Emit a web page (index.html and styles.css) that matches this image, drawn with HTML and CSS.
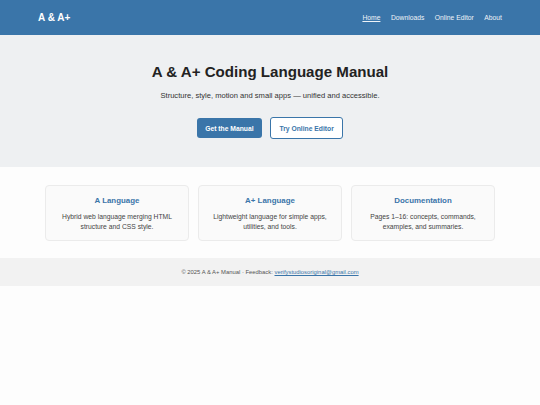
FILE: index.html
```html
<!DOCTYPE html>
<html lang="en">
<head>
<meta charset="utf-8">
<title>A &amp; A+ Coding Language Manual</title>
<link rel="stylesheet" href="styles.css">
</head>
<body>
<header class="site-header">
  <div class="logo">A &amp; A+</div>
  <nav class="nav">
    <a class="nav-link active" href="#">Home</a>
    <a class="nav-link" href="#">Downloads</a>
    <a class="nav-link" href="#">Online Editor</a>
    <a class="nav-link" href="#">About</a>
  </nav>
</header>
<section class="hero">
  <h1 class="hero-title">A &amp; A+ Coding Language Manual</h1>
  <p class="hero-sub">Structure, style, motion and small apps — unified and accessible.</p>
  <div class="hero-actions">
    <a class="btn btn-primary" href="#">Get the Manual</a>
    <a class="btn btn-outline" href="#">Try Online Editor</a>
  </div>
</section>
<section class="features">
  <div class="card">
    <h2 class="card-title">A Language</h2>
    <p class="card-text">Hybrid web language merging HTML structure and CSS style.</p>
  </div>
  <div class="card">
    <h2 class="card-title">A+ Language</h2>
    <p class="card-text">Lightweight language for simple apps, utilities, and tools.</p>
  </div>
  <div class="card">
    <h2 class="card-title">Documentation</h2>
    <p class="card-text">Pages 1–16: concepts, commands, examples, and summaries.</p>
  </div>
</section>
<footer class="site-footer">
  <p class="footer-text">© 2025 A &amp; A+ Manual · Feedback: <a class="footer-link" href="#">verifystudiosoriginal@gmail.com</a></p>
</footer>
</body>
</html>
```
FILE: styles.css
```css
* { box-sizing: border-box; }
html, body { margin: 0; padding: 0; }
body {
  font-family: "Liberation Sans", Arial, sans-serif;
  background: #fdfdfd;
  color: #333;
}
.site-header {
  height: 35px;
  background: #3a75a9;
  display: flex;
  align-items: center;
  justify-content: space-between;
  padding: 0 38px;
}
.logo {
  color: #fff;
  font-weight: bold;
  font-size: 10px;
}
.nav {
  display: flex;
  gap: 10.5px;
}
.nav-link {
  color: #eef3f8;
  font-size: 6.75px;
  text-decoration: none;
}
.nav-link.active { text-decoration: underline; }
.hero {
  background: #eef0f2;
  padding: 28px 20px 28px;
  text-align: center;
}
.hero-title {
  margin: 0;
  font-size: 15.1px;
  line-height: normal;
  font-weight: bold;
  color: #222;
}
.hero-sub {
  margin: 11px 0 0;
  font-size: 7.58px;
  line-height: normal;
  color: #333;
}
.hero-actions {
  margin-top: 17px;
  display: flex;
  justify-content: center;
  align-items: center;
  gap: 8px;
}
.btn {
  font-size: 6.75px;
  font-weight: bold;
  line-height: normal;
  text-decoration: none;
  padding: 6.3px 8.45px;
  border-radius: 3px;
}
.btn-primary {
  background: #3a75a9;
  color: #fff;
}
.btn-outline {
  background: #fff;
  color: #3a75a9;
  border: 1px solid #3a75a9;
  padding: 6.6px 8.45px;
}
.features {
  display: grid;
  grid-template-columns: repeat(3, 1fr);
  gap: 9px;
  padding: 18px 45px 17px;
}
.card {
  background: #fafafa;
  border: 1px solid #ebebeb;
  border-radius: 4px;
  padding: 10px 9px 7px;
  text-align: center;
  height: 56px;
}
.card-title {
  margin: 0;
  font-size: 7.9px;
  line-height: normal;
  font-weight: bold;
  color: #3a75a9;
}
.card-text {
  margin: 6.4px 0 0;
  font-size: 6.75px;
  line-height: 10.8px;
  color: #444;
}
.site-footer {
  background: #f2f2f2;
  height: 28px;
  display: flex;
  align-items: center;
  justify-content: center;
}
.footer-text {
  margin: 0;
  font-size: 5.87px;
  line-height: normal;
  color: #555;
}
.footer-link {
  color: #3a75a9;
  text-decoration: underline;
}
```
